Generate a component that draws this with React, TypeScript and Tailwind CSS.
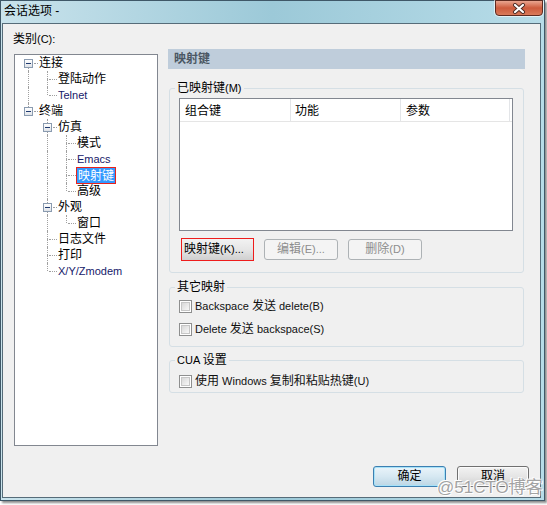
import React from "react";

const FONT = '"Liberation Sans", "Noto Sans CJK SC", sans-serif';

function Mix({ s, latinClass = "" }: { s: string; latinClass?: string }) {
  const parts = s.split(/([\u3000-\u9fff\uff00-\uffef]+)/).filter((p) => p.length > 0);
  return (
    <>
      {parts.map((p, i) =>
        /[\u3000-\u9fff\uff00-\uffef]/.test(p) ? (
          <span key={i} className="text-[12px]">
            {p}
          </span>
        ) : (
          <span key={i} className={"text-[11px] " + latinClass}>
            {p}
          </span>
        )
      )}
    </>
  );
}

type Row = {
  label: string;
  level: number;
  top: boolean;
  bottom: boolean;
  exp?: boolean;
  anc: boolean[];
  sel?: boolean;
};

const rows: Row[] = [
  { label: "连接", level: 0, top: false, bottom: true, exp: true, anc: [] },
  { label: "登陆动作", level: 1, top: true, bottom: true, anc: [true] },
  { label: "Telnet", level: 1, top: true, bottom: false, anc: [true] },
  { label: "终端", level: 0, top: true, bottom: false, exp: true, anc: [] },
  { label: "仿真", level: 1, top: true, bottom: true, exp: true, anc: [false] },
  { label: "模式", level: 2, top: true, bottom: true, anc: [false, true] },
  { label: "Emacs", level: 2, top: true, bottom: true, anc: [false, true] },
  { label: "映射键", level: 2, top: true, bottom: true, anc: [false, true], sel: true },
  { label: "高级", level: 2, top: true, bottom: false, anc: [false, true] },
  { label: "外观", level: 1, top: true, bottom: true, exp: true, anc: [false] },
  { label: "窗口", level: 2, top: true, bottom: false, anc: [false, true] },
  { label: "日志文件", level: 1, top: true, bottom: true, anc: [false] },
  { label: "打印", level: 1, top: true, bottom: true, anc: [false] },
  { label: "X/Y/Zmodem", level: 1, top: true, bottom: false, anc: [false] },
];

function VSeg({ on, h }: { on: boolean; h: string }) {
  return (
    <div className={"w-[9px] flex " + h}>
      <div className="w-[4px]" />
      {on ? <div className="h-full border-l border-dotted border-[#a0a0a0]" /> : null}
    </div>
  );
}

function TreeRow({ r }: { r: Row }) {
  return (
    <div className="flex h-[16px] items-stretch">
      {r.anc.map((a, i) => (
        <div key={i} className="w-[19px] flex">
          <div className="w-[9px]" />
          {a ? <div className="h-full border-l border-dotted border-[#a0a0a0]" /> : null}
        </div>
      ))}
      {r.exp ? (
        <div className="w-[19px] flex">
          <div className="w-[5px]" />
          <div className="w-[9px] flex flex-col">
            <VSeg on={r.top} h="h-[4px]" />
            <div className="w-[9px] h-[9px] border border-[#8a9bb0] bg-gradient-to-b from-white to-[#dfe3e8] flex items-center justify-center">
              <div className="w-[5px] h-[1px] bg-[#1f3a70]" />
            </div>
            <VSeg on={r.bottom} h="h-[3px]" />
          </div>
          <div className="w-[5px] flex items-start pt-[8px] pl-[1px]">
            <div className="w-full border-t border-dotted border-[#a0a0a0]" />
          </div>
        </div>
      ) : (
        <div className="w-[19px] flex">
          <div className="w-[9px]" />
          <div className="w-[1px] flex flex-col">
            <div className={"h-[8px] " + (r.top ? "border-l border-dotted border-[#a0a0a0]" : "")} />
            <div className={"h-[8px] " + (r.bottom ? "border-l border-dotted border-[#a0a0a0]" : "")} />
          </div>
          <div className="w-[9px] flex items-start pt-[8px] pl-[1px]">
            <div className="w-full border-t border-dotted border-[#a0a0a0]" />
          </div>
        </div>
      )}
      {r.sel ? (
        <span className="block h-[17px] border border-[#e8221c] bg-[#3399ff] text-white px-[1px] pt-[1px] leading-[14px] text-[12px]">
          {r.label}
        </span>
      ) : (
        <span className="block h-[16px] px-[1px] pt-[1px] leading-[15px] text-black">
          <Mix s={r.label} latinClass="text-[#16206a]" />
        </span>
      )}
    </div>
  );
}

function Checkbox() {
  return (
    <div className="w-[13px] h-[13px] border border-[#8e8f8f] bg-white p-[1px]">
      <div className="w-full h-full border border-[#c6c6c6] bg-gradient-to-br from-[#d8d8d8] to-[#f8f8f8]" />
    </div>
  );
}

function CheckRow({ text, cls }: { text: string; cls: string }) {
  return (
    <div className={"flex items-center h-[17px] ml-[9px] gap-[3px] " + cls}>
      <Checkbox />
      <span className="leading-[15px] text-[#111]">
        <Mix s={text} />
      </span>
    </div>
  );
}

export default function App() {
  return (
    <div className="w-[547px] h-[505px] bg-white text-[12px]" style={{ fontFamily: FONT }}>
      <div className="w-[545px] h-[501px] border border-[#3f5868] flex flex-col shadow-[2px_2px_2px_rgba(0,0,0,0.45)] bg-gradient-to-r from-[#c9e3ec] via-[#9cc9d8] to-[#b7dce8]">
        {/* title bar */}
        <div className="h-[22px] flex items-start justify-between">
          <span className="pl-[3px] mt-[3px] leading-[15px] text-[12px] text-black">会话选项 -</span>
          <div className="-mt-[1px] mr-[1px] w-[48px] h-[16px] rounded-b-[4px] border border-[#5e2a20] shadow-[0_0_0_1px_rgba(255,255,255,0.6)] bg-gradient-to-b from-[#e9a590] via-[#cd5a3c] to-[#d97a5a] flex items-center justify-center">
            <svg width="14" height="11" viewBox="0 0 14 11">
              <path d="M3 2 L11 9 M11 2 L3 9" stroke="#4a2a24" strokeWidth="4" strokeLinecap="round" />
              <path d="M3 2 L11 9 M11 2 L3 9" stroke="#ffffff" strokeWidth="2.2" strokeLinecap="round" />
            </svg>
          </div>
        </div>
        {/* client */}
        <div className="ml-[1px] mr-[3px] h-[475px] border border-[#566c79] bg-[#f0f0f0] flex flex-col relative">
          <div className="flex items-start">
            <div className="ml-[10px] mt-[8px] flex flex-col">
              <div className="h-[15px] leading-[15px] text-black">
                <Mix s="类别(C):" />
              </div>
              <div className="mt-[7px] ml-[1px] w-[144px] h-[392px] border border-[#828790] bg-white">
                <div className="pl-[4px]">
                  {rows.map((r, i) => (
                    <TreeRow key={i} r={r} />
                  ))}
                </div>
              </div>
            </div>
            <div className="ml-[10px] mt-[25px] w-[357px] flex flex-col">
              <div className="h-[20px] bg-[#bfcddb] flex items-center pl-[6px] font-bold text-[12px] text-[#4b5763]">
                映射键
              </div>
              <fieldset className="mt-[12px] ml-[1px] mr-[1px] border border-[#d5dfe5] rounded-[3px] pb-[11px]">
                <legend className="ml-[5px] px-[2px] h-[15px] leading-[15px] text-black">
                  <Mix s="已映射键(M)" />
                </legend>
                <div className="mt-[2px] ml-[9px] w-[334px] h-[133px] border border-[#828790] bg-white">
                  <div className="h-[23px] flex border-b border-[#e5e5e5] text-[12px] text-black leading-[15px]">
                    <div className="w-[111px] pl-[5px] pt-[5px] border-r border-[#e3e5e8]">组合键</div>
                    <div className="w-[110px] pl-[4px] pt-[5px] border-r border-[#e3e5e8]">功能</div>
                    <div className="w-[109px] pl-[5px] pt-[5px] border-r border-[#e3e5e8]">参数</div>
                  </div>
                </div>
                <div className="mt-[7px] h-[23px] flex items-center">
                  <div className="ml-[11px] w-[73px] h-[23px] border border-[#ee1c1c] bg-gradient-to-b from-[#f2f2f2] via-[#e6e6e6] to-[#cfcfcf] flex items-center pl-[2px] leading-[15px] text-black">
                    <Mix s="映射键(K)..." />
                  </div>
                  <div className="ml-[10px] w-[74px] h-[21px] rounded-[3px] border border-[#adb2b5] bg-[#f4f4f4] flex items-center justify-center leading-[15px] text-[#8d8d8d]">
                    <Mix s="编辑(E)..." />
                  </div>
                  <div className="ml-[10px] w-[74px] h-[21px] rounded-[3px] border border-[#adb2b5] bg-[#f4f4f4] flex items-center justify-center leading-[15px] text-[#8d8d8d]">
                    <Mix s="删除(D)" />
                  </div>
                </div>
              </fieldset>
              <fieldset className="mt-[7px] ml-[1px] mr-[1px] border border-[#d5dfe5] rounded-[3px] pb-[8px]">
                <legend className="ml-[5px] px-[2px] h-[15px] leading-[15px] text-black text-[12px]">其它映射</legend>
                <CheckRow text="Backspace 发送 delete(B)" cls="mt-[3px]" />
                <CheckRow text="Delete 发送 backspace(S)" cls="mt-[6px]" />
              </fieldset>
              <fieldset className="mt-[6px] ml-[1px] mr-[1px] border border-[#d5dfe5] rounded-[3px] pb-[2px]">
                <legend className="ml-[5px] px-[2px] h-[15px] leading-[15px] text-black">
                  <Mix s="CUA 设置" />
                </legend>
                <CheckRow text="使用 Windows 复制和粘贴热键(U)" cls="mt-[5px]" />
              </fieldset>
            </div>
          </div>
          <div className="mt-[20px] flex justify-end gap-[11px] pr-[11px]">
            <div className="w-[73px] h-[21px] rounded-[3px] border border-[#3c7fb1] shadow-[inset_0_0_0_1px_#a7e2f8] bg-gradient-to-b from-[#eaf4fa] via-[#d6e8f2] to-[#bcd6e4] flex items-center justify-center text-[12px] text-black leading-[15px]">
              确定
            </div>
            <div className="w-[72px] h-[21px] rounded-[3px] border border-[#707070] shadow-[inset_0_0_0_1px_#fbfbfb] bg-gradient-to-b from-[#f2f2f2] via-[#e5e5e5] to-[#cfcfcf] flex items-center justify-center text-[12px] text-black leading-[15px]">
              取消
            </div>
          </div>
          <div className="absolute left-[434px] top-[453px] whitespace-nowrap text-[17px] leading-[22px] text-[#a3a3a3] [text-shadow:0_0_2px_#fff,0_0_1px_#fff,1px_1px_0_#fff,-1px_-1px_0_#fff]">
            @51CTO博客
          </div>
        </div>
      </div>
    </div>
  );
}
